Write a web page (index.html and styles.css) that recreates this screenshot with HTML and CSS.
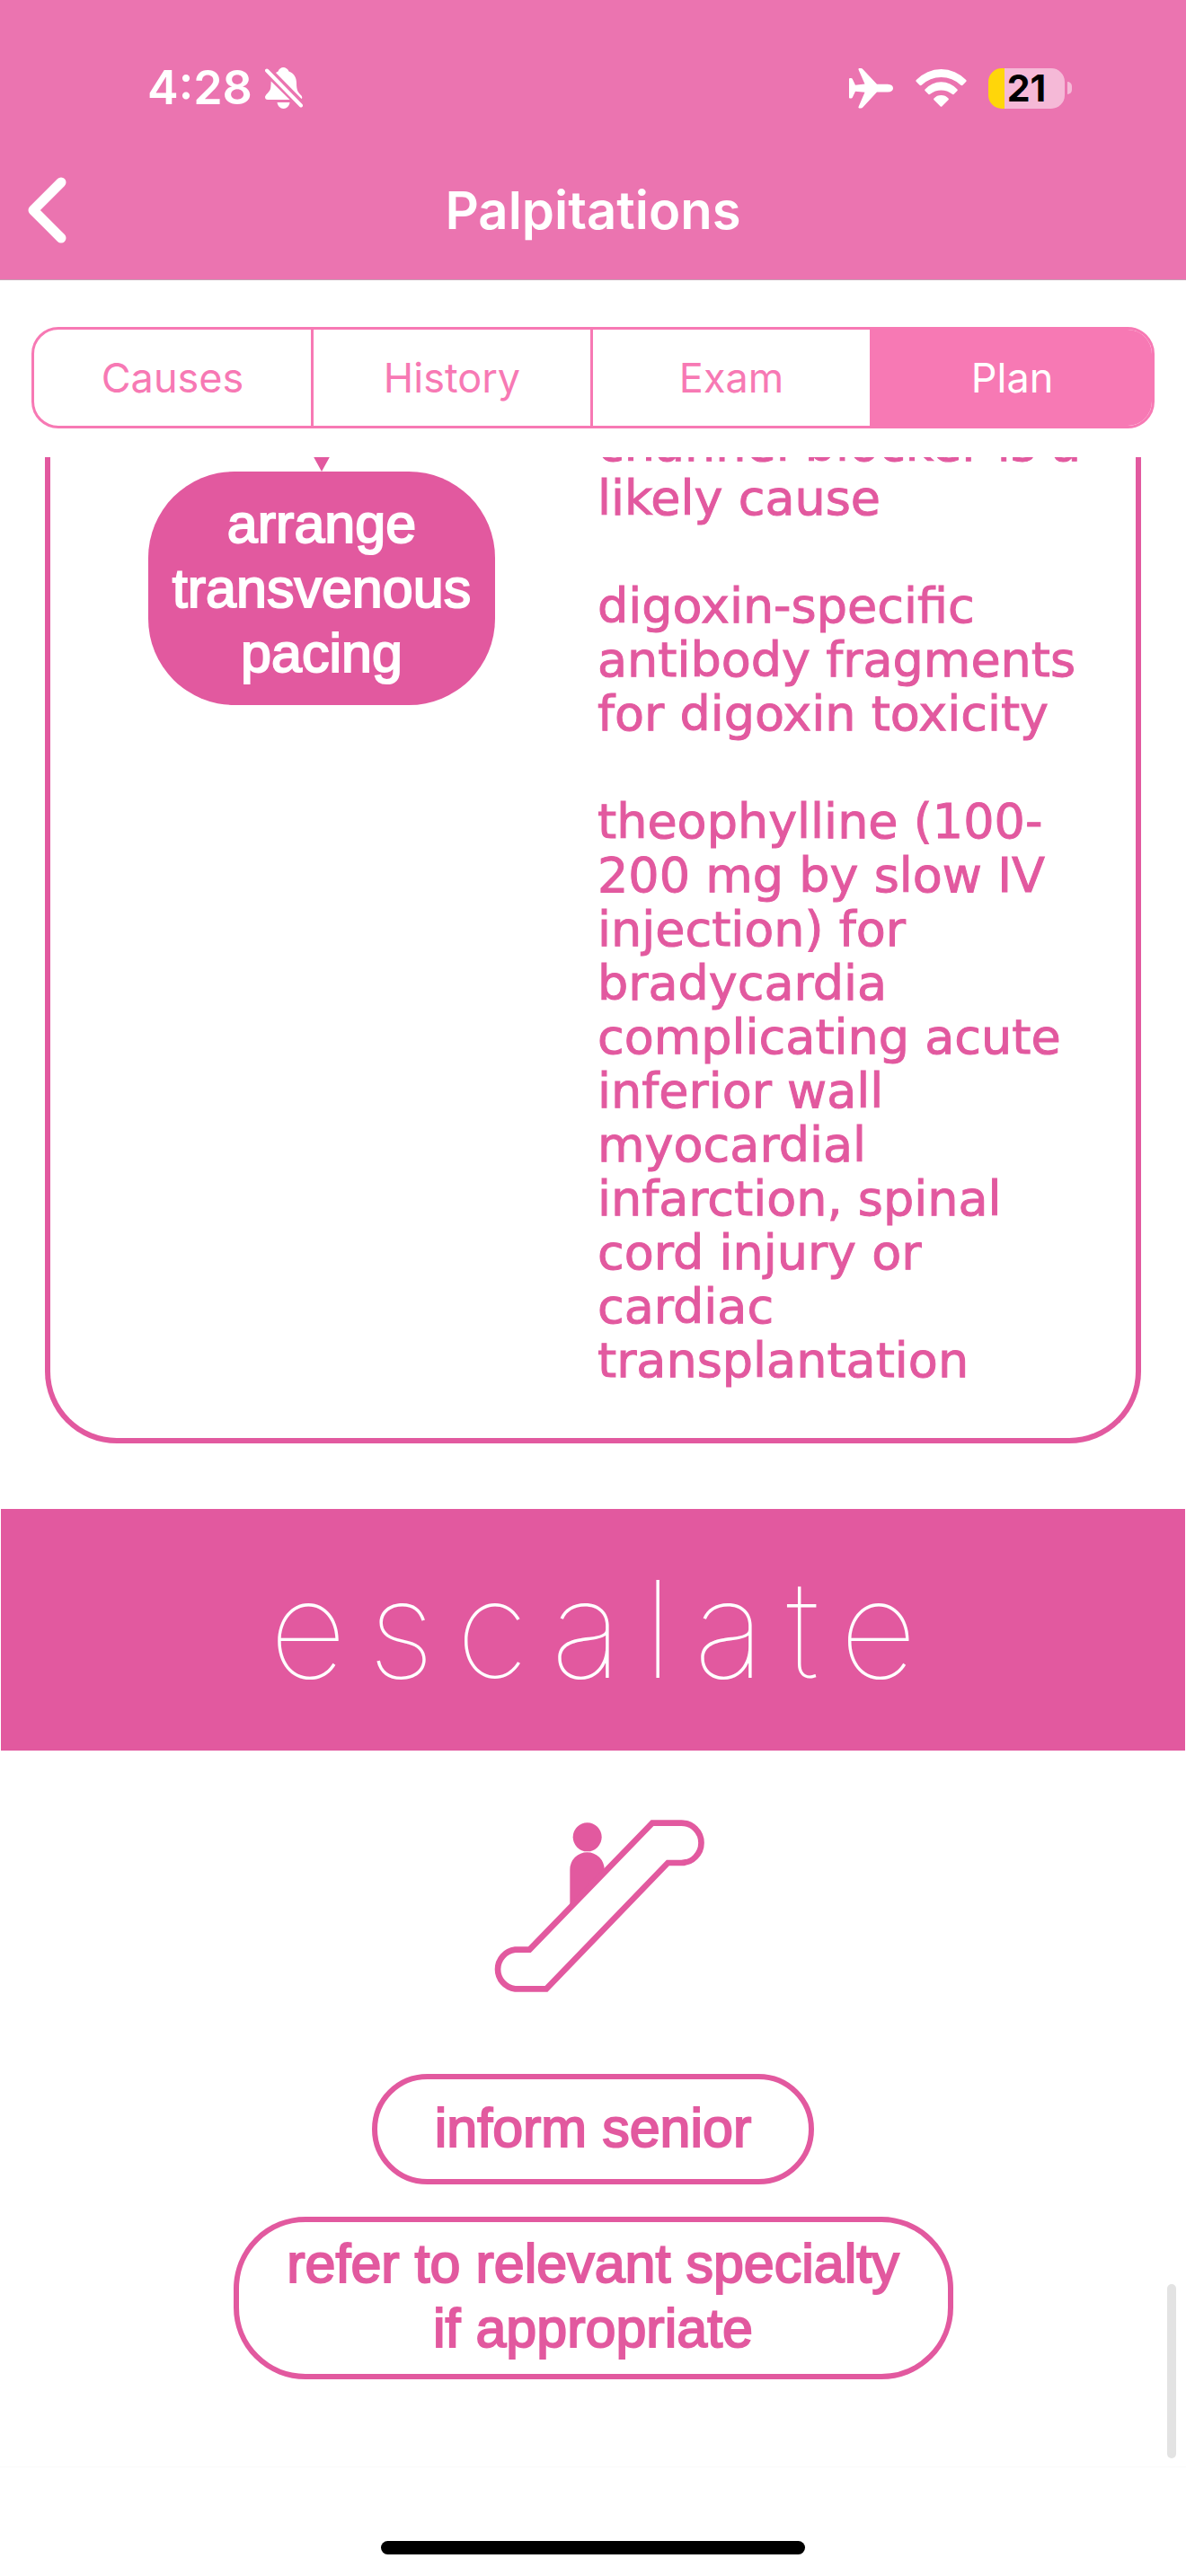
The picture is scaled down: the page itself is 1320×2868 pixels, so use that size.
FILE: index.html
```html
<!DOCTYPE html>
<html lang="en">
<head>
<meta charset="utf-8">
<meta name="viewport" content="width=device-width, initial-scale=1">
<title>Palpitations</title>
<link rel="stylesheet" href="styles.css">
</head>
<body>
<div class="app">
  <header class="header">
    <div class="status">
      <div class="status-group">
        <span class="time">4:28</span>
        <svg class="bell" width="42" height="46" viewBox="0 0 42 46" fill="#fff" aria-hidden="true">
          <path d="M12 6Q13 5 14.5 4.500C15.500 1.500 18 0 20.300 0S25.500 1.500 26.500 4.500C33 7 35 12 35 17.500C35 26 37 28 40.500 31.500Q42 34 40.500 35Z"/>
          <path d="M6.700 15.500L27.500 36H3Q0 36 0 33C0 31 5 27 6 24C6.600 21 6.500 18 6.700 15.500Z"/>
          <path d="M13.500 39H27.500C27 43 24 46 20.500 46S14 43 13.500 39Z"/>
          <path d="M2 3.500L40 42.500" stroke="#fff" stroke-width="4" stroke-linecap="round"/>
        </svg>
      </div>
      <div class="status-group status-right">
        <svg width="50" height="45" viewBox="0 0 50 45" fill="#fff" aria-hidden="true">
          <path d="M43 17.800Q49 18.300 49 22.200Q49 26.100 43 26.600H31L15.500 43.200Q14.500 44.400 13 44.400H11.300Q10 44.200 10.500 43L17.500 26.800L7 25.700L3.800 32.500Q3.300 33.500 2.300 33.500H1Q0 33.500 0 32.500V12Q0 11 1 11H2.300Q3.300 11 3.800 12L7 18.700L17.500 17.600L10.500 1.500Q10 .2 11.300 0H13Q14.500 0 15.500 1.200L31 17.800Z"/>
        </svg>
        <svg width="57" height="42" viewBox="0 0 57 42" fill="#fff" aria-hidden="true">
          <path d="M.8 12A38 38 0 0 1 56.200 12Q57 13 56.300 13.800L52.500 17.700Q51.300 18.600 50.300 17.700A31.600 31.600 0 0 0 6.700 17.700Q5.700 18.600 4.500 17.700L.7 13.800Q0 13 .8 12Z"/>
          <path d="M10.500 22.500A24 24 0 0 1 46.500 22.500Q47.200 23.300 46.500 24L42.500 28Q41.700 28.500 40.800 27.800A19.600 19.600 0 0 0 16.200 27.800Q15.300 28.500 14.500 28L10.500 24Q9.800 23.300 10.500 22.500Z"/>
          <path d="M20.500 32.500A11 11 0 0 1 36.500 32.500Q37.300 33.300 36.500 34.200L29.500 41.200Q28.500 42.200 27.500 41.200L20.500 34.200Q19.700 33.300 20.500 32.500Z"/>
        </svg>
        <div class="battery"><span class="battery-level">21</span><span class="battery-cap"></span></div>
      </div>
    </div>
    <div class="titlebar">
      <button class="back" type="button" aria-label="Back">
        <svg width="44" height="76" viewBox="0 0 44 76" fill="none" stroke="#fff" stroke-width="11" stroke-linecap="round" stroke-linejoin="round" aria-hidden="true"><path d="M38 7L7 38L38 69"/></svg>
      </button>
      <h1 class="title">Palpitations</h1>
    </div>
  </header>

  <nav class="tabs" aria-label="Sections">
    <button class="tab" type="button">Causes</button>
    <button class="tab" type="button">History</button>
    <button class="tab" type="button">Exam</button>
    <button class="tab tab-active" type="button" aria-current="page">Plan</button>
  </nav>

  <main class="scroller">
    <section class="card">
      <div class="flow">
        <svg class="arrow" width="24" height="64" viewBox="0 0 24 64" aria-hidden="true"><path d="M10 0H14V44H23L12 64L1 44H10Z" fill="#e2599f"/></svg>
        <div class="node">arrange transvenous pacing</div>
      </div>
      <div class="notes">
        <p>channel blocker is a likely cause</p>
        <p>digoxin-specific antibody fragments for digoxin toxicity</p>
        <p>theophylline (100-<wbr>200 mg by slow IV injection) for bradycardia complicating acute inferior wall myocardial infarction, spinal cord injury or cardiac transplantation</p>
      </div>
    </section>

    <h2 class="banner">escalate</h2>

    <section class="steps">
      <svg class="escalator" width="236" height="192" viewBox="84 77 708 576" aria-hidden="true">
        <circle cx="401" cy="135" r="48" fill="#e2599f"/>
        <path d="M343 370V243A57.500 57.500 0 0 1 458 243V260L350 370Z" fill="#e2599f"/>
        <path d="M208 511L618 88H715A66 66 0 0 1 715 221H670L264 642H160A66 66 0 0 1 160 511Z" fill="#fff" stroke="#e2599f" stroke-width="20"/>
      </svg>
      <div class="pill pill-single">inform senior</div>
      <div class="pill pill-double">refer to relevant specialty if appropriate</div>
    </section>
    <span class="scrollbar"></span>
  </main>

  <footer class="home"><span class="home-bar"></span></footer>
</div>
</body>
</html>
```
FILE: styles.css
```css
* { box-sizing: border-box; }

body {
  margin: 0;
  background: #fff;
  font-family: Inter, "Liberation Sans", sans-serif;
}

h1, h2, p { margin: 0; }

button {
  margin: 0;
  padding: 0;
  border: 0;
  background: none;
  font: inherit;
  cursor: pointer;
}

svg { display: block; }

.app {
  display: flex;
  flex-direction: column;
  min-height: 100vh;
}

/* Header */
.header {
  color: #fff;
  background: #eb74b0;
  border-bottom: 1px solid #c4a3b4;
}

.status {
  display: flex;
  align-items: center;
  justify-content: space-between;
  padding: 66px 127px 0 164px;
  height: 130px;
}

.status-group {
  display: flex;
  align-items: center;
  gap: 14px;
}

.status-right { gap: 24px; }

.time {
  font-size: 52px;
  font-weight: 600;
  line-height: 64px;
}

.battery {
  display: flex;
  align-items: center;
  gap: 3px;
}

.battery-level {
  width: 85px;
  border-radius: 15px;
  background: linear-gradient(to right, #ffd60a 18px, #f5b9d7 18px);
  color: #000;
  font-size: 41px;
  font-weight: 700;
  line-height: 45px;
  text-align: center;
}

.battery-cap {
  width: 5px;
  height: 14px;
  border-radius: 0 5px 5px 0;
  background: #f5b9d7;
}

.titlebar {
  display: grid;
  grid-template-columns: 1fr auto 1fr;
  align-items: center;
  height: 181px;
  padding: 26px 30px 0;
}

.back { justify-self: start; }

.title {
  font-size: 58px;
  font-weight: 600;
  line-height: 72px;
}

/* Segmented control */
.tabs {
  display: grid;
  grid-template-columns: repeat(4, 1fr);
  margin: 52px 35px 32px;
  border: 3px solid #f779b4;
  border-radius: 30px;
  overflow: hidden;
}

.tab {
  height: 107px;
  border-right: 3px solid #f779b4;
  color: #f779b4;
  font-size: 45px;
}

.tab:last-child { border-right: 0; }

.tab-active {
  background: #f779b4;
  color: #fff;
}

/* Scrolling content */
.scroller {
  position: relative;
  flex: 1;
  overflow: hidden;
  border-bottom: 1px solid #fafafa;
  color: #e2599f;
  font-family: "Liberation Sans", Arial, sans-serif;
}

.card {
  display: grid;
  grid-template-columns: 1fr 1fr;
  margin: -48px 50px 0;
  padding-bottom: 56px;
  border: 6px solid #e2599f;
  border-top: 0;
  border-radius: 0 0 80px 80px;
}

.flow {
  display: flex;
  flex-direction: column;
  align-items: center;
}

.node {
  max-width: 386px;
  padding: 22px 24px;
  border-radius: 96px;
  background: #e2599f;
  color: #fff;
}

.node,
.pill {
  font-size: 61px;
  line-height: 72px;
  text-align: center;
  -webkit-text-stroke: 2px currentColor;
}

.notes {
  display: flex;
  flex-direction: column;
  gap: 60px;
  padding: 4px 38px 0 5px;
  font-family: Chalkduster, "DejaVu Sans", sans-serif;
  font-size: 54px;
  line-height: 60px;
  -webkit-text-stroke: 1px currentColor;
}

.banner {
  margin: 73px 1px 0;
  padding: 36px 0 37px 24px;
  background: #e2599f;
  color: #fff;
  font-family: Inter, Roboto, sans-serif;
  font-size: 150px;
  font-weight: 100;
  line-height: 196px;
  letter-spacing: 24px;
  text-align: center;
}

.steps {
  display: flex;
  flex-direction: column;
  align-items: center;
  padding: 77px 32px 96px;
}

.escalator { margin: 0 0 91px 12px; }

.pill {
  border: 6px solid #e2599f;
  border-radius: 80px;
}

.pill-single {
  margin-bottom: 36px;
  padding: 18px 64px 21px;
}

.pill-double {
  max-width: 801px;
  padding: 10px 52px 15px;
}

.scrollbar {
  position: absolute;
  right: 11px;
  bottom: 9px;
  width: 10px;
  height: 194px;
  border-radius: 5px;
  background: #e3e3e3;
}

.home {
  display: flex;
  justify-content: center;
  padding: 82px 0 24px;
}

.home-bar {
  width: 472px;
  height: 15px;
  border-radius: 8px;
  background: #000;
}
```
